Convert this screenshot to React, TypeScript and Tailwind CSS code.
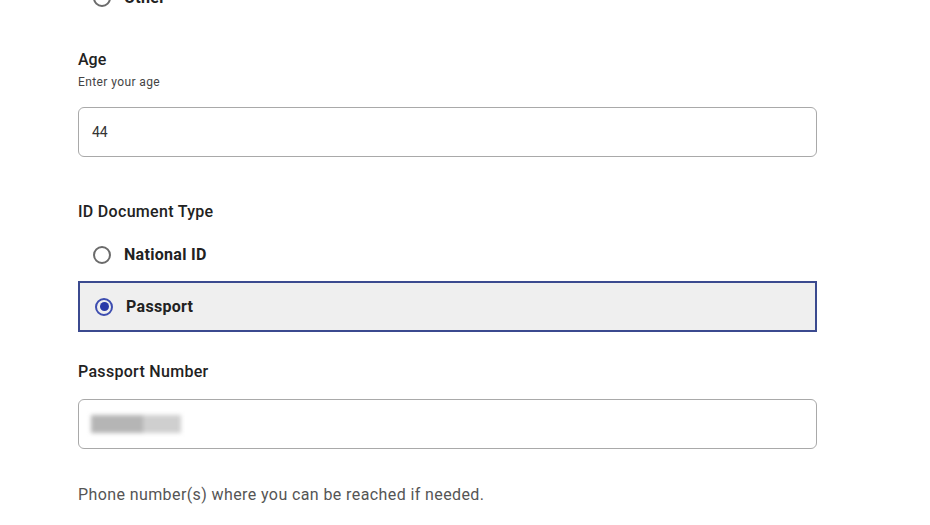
import React from "react";

function Radio({ checked }: { checked?: boolean }) {
  if (checked) {
    return (
      <span className="grid h-[18px] w-[18px] place-items-center rounded-full border-2 border-[#3d4db0]">
        <span className="h-[9px] w-[9px] rounded-full bg-[#2a3aa8]" />
      </span>
    );
  }
  return <span className="h-[18px] w-[18px] rounded-full border-2 border-[#6b6b6b]" />;
}

export default function App() {
  return (
    <div className="h-[525px] w-[930px] overflow-hidden bg-white font-['Roboto','Liberation_Sans',sans-serif] text-[#222]">
      <div className="ml-[78px] flex w-[739px] flex-col">
        <div className="-mt-[14px] flex h-[24px] items-center gap-[13px] pl-[15px]">
          <Radio />
          <span className="text-[16px] font-bold tracking-[0.3px]">Other</span>
        </div>

        <div className="mt-[40px] h-[20px] text-[16px] font-medium leading-[20px]">Age</div>
        <div className="mt-[5px] h-[14px] text-[12px] leading-[14px] tracking-[0.4px] text-[#444]">Enter your age</div>
        <div className="mt-[18px] flex h-[50px] items-center rounded-[6px] border border-[#a9a9a9] px-[13px] text-[14px] text-[#333]">
          44
        </div>

        <div className="mt-[45px] h-[20px] text-[16px] font-medium leading-[20px] tracking-[0.3px]">ID Document Type</div>
        <label className="mt-[21px] flex h-[24px] items-center gap-[13px] pl-[15px]">
          <Radio />
          <span className="text-[16px] font-bold tracking-[0.3px]">National ID</span>
        </label>
        <label className="mt-[14px] flex h-[51px] items-center gap-[13px] border-2 border-[#3b4a8f] bg-[#efefef] pl-[15px]">
          <Radio checked />
          <span className="text-[16px] font-bold tracking-[0.3px]">Passport</span>
        </label>

        <div className="mt-[30px] h-[20px] text-[16px] font-medium leading-[20px] tracking-[0.3px]">Passport Number</div>
        <div className="mt-[17px] flex h-[50px] items-center rounded-[6px] border border-[#a9a9a9] px-[12px]">
          <div className="flex h-[18px] blur-[2px]">
            <span className="h-full w-[52px] bg-[#b5b5b5]" />
            <span className="h-full w-[38px] bg-[#cfcfcf]" />
          </div>
        </div>

        <div className="mt-[36px] h-[20px] text-[16px] leading-[20px] tracking-[0.4px] text-[#555]">
          Phone number(s) where you can be reached if needed.
        </div>
      </div>
    </div>
  );
}
